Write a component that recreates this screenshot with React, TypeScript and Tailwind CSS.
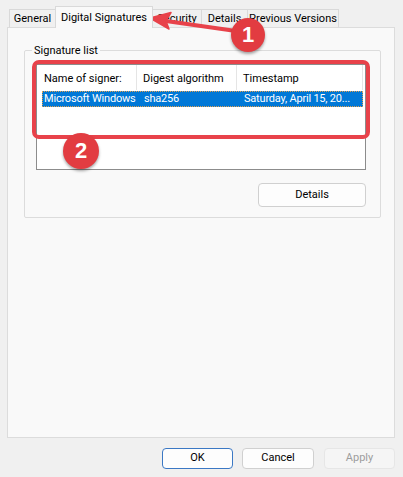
import React from "react";

const font = "font-['Roboto','Liberation_Sans',sans-serif]";

function Tab({ label, w, selected }: { label: string; w: string; selected?: boolean }) {
  if (selected) {
    return (
      <div
        className={`relative z-10 -ml-px -mb-px h-[22px] ${w} flex items-start justify-center pt-[3px] border border-b-0 border-[#d9d9d9] bg-[#f9f9f9] text-[11px] text-black whitespace-nowrap`}
      >
        {label}
      </div>
    );
  }
  return (
    <div
      className={`-ml-px h-[18px] ${w} flex items-center justify-center pt-[1px] border border-b-0 border-[#d9d9d9] bg-[#f0f0f0] text-[11px] text-black whitespace-nowrap`}
    >
      {label}
    </div>
  );
}

function Btn({ label, w, variant }: { label: string; w: string; variant?: "default" | "disabled" }) {
  const base = `${w} h-[21px] flex items-center justify-center rounded-[4px] border text-[11px]`;
  if (variant === "default")
    return <div className={`${base} border-[#3b78c4] bg-[#fdfdfd] text-black`}>{label}</div>;
  if (variant === "disabled")
    return <div className={`${base} border-[#e6e6e6] bg-[#f5f5f5] text-[#9d9d9d]`}>{label}</div>;
  return <div className={`${base} border-[#d0d0d0] bg-[#fdfdfd] text-black`}>{label}</div>;
}

export default function App() {
  return (
    <div className={`relative w-[403px] h-[477px] overflow-hidden bg-[#f0f0f0] ${font} text-black`}>
      {/* tabs */}
      <div className="flex items-end h-[27px] pl-[10px]">
        <Tab label="General" w="w-[47px]" />
        <Tab label="Digital Signatures" w="w-[98px]" selected />
        <Tab label="Security" w="w-[50px]" />
        <Tab label="Details" w="w-[47px]" />
        <Tab label="Previous Versions" w="w-[92px]" />
      </div>

      {/* tab page */}
      <div className="ml-[7px] w-[388px] h-[411px] border border-[#dcdcdc] bg-[#f9f9f9] pl-[16px] pt-[22px]">
        {/* group box */}
        <div className="relative w-[357px] h-[168px] border border-[#dcdcdc] rounded-[2px] pl-[11px] pt-[13px]">
          <span className="absolute left-[7px] -top-[7px] px-[2px] bg-[#f9f9f9] text-[11px] leading-[14px] text-black">
            Signature list
          </span>

          {/* list view */}
          <div className="w-[330px] h-[106px] border border-[#8c8c8c] bg-white">
            <div className="flex h-[25px] text-[11px] text-black">
              <div className="w-[100px] border-r border-[#e5e5e5] pl-[7px] pt-[3px] flex items-center whitespace-nowrap">Name of signer:</div>
              <div className="w-[100px] border-r border-[#e5e5e5] pl-[6px] pt-[3px] flex items-center whitespace-nowrap">Digest algorithm</div>
              <div className="w-[126px] border-r border-[#e5e5e5] pl-[6px] pt-[3px] flex items-center whitespace-nowrap">Timestamp</div>
            </div>
            <div className="mt-[1px] ml-[5px] w-[321px] h-[16px] flex items-center pt-[1px] bg-[#0078d7] text-white text-[11px] tracking-[-0.2px] outline-1 outline-dotted outline-[#e0a050] -outline-offset-1">
              <div className="w-[100px] shrink-0 pl-[2px] whitespace-nowrap">Microsoft Windows</div>
              <div className="w-[100px] shrink-0 pl-[2px] whitespace-nowrap">sha256</div>
              <div className="pl-[2px] whitespace-nowrap">Saturday, April 15, 20...</div>
            </div>
          </div>

          <div className="mt-[13px] ml-[222px] w-[108px] h-[24px] flex items-center justify-center rounded-[4px] border border-[#d0d0d0] bg-[#fdfdfd] text-[11px] text-black">
            Details
          </div>
        </div>
      </div>

      {/* bottom buttons */}
      <div className="flex justify-end gap-[9px] pr-[8px] mt-[10px]">
        <Btn label="OK" w="w-[71px]" variant="default" />
        <Btn label="Cancel" w="w-[72px]" />
        <div className="ml-[1px]">
          <Btn label="Apply" w="w-[71px]" variant="disabled" />
        </div>
      </div>

      {/* annotation overlay */}
      <svg className="absolute left-0 top-0 pointer-events-none" width="403" height="477" viewBox="0 0 403 477">
        <rect x="34" y="62" width="334" height="75" rx="5" fill="none" stroke="#e8424a" strokeWidth="4" />
        <line x1="236" y1="31" x2="166" y2="21" stroke="#e8424a" strokeWidth="4" strokeLinecap="round" />
        <polygon points="150,18 171,12.5 166,21 169,29" fill="#e8424a" stroke="#e8424a" strokeWidth="1.5" strokeLinejoin="round" />
      </svg>
      <div className="absolute left-[231px] top-[18px] w-[34px] h-[34px] rounded-full bg-[#e23c41] shadow-[0_2px_3px_rgba(0,0,0,0.35)] flex items-center justify-center text-white font-['Liberation_Sans',sans-serif] font-bold text-[22px] leading-none">
        1
      </div>
      <div className="absolute left-[63px] top-[133px] w-[36px] h-[36px] rounded-full bg-[#e23c41] shadow-[0_2px_3px_rgba(0,0,0,0.35)] flex items-center justify-center text-white font-['Liberation_Sans',sans-serif] font-bold text-[22px] leading-none">
        2
      </div>
    </div>
  );
}
